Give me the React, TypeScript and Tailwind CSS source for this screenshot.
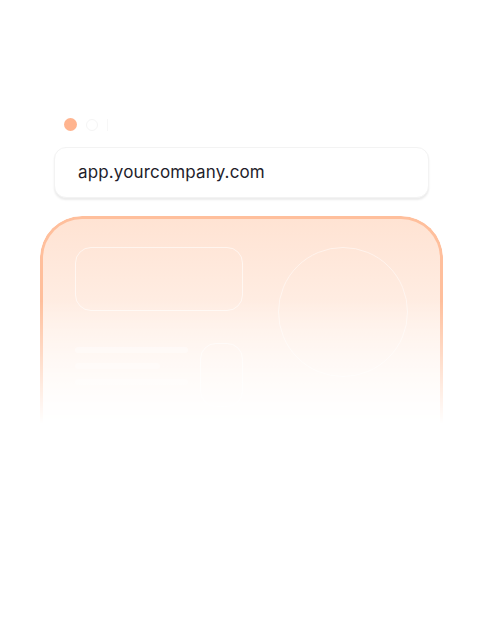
import React from 'react';

export default function App() {
  return (
    <div className="min-h-[636px] w-[483px] bg-white font-['Inter','Noto_Sans',sans-serif]">
      <div className="px-[54px] pt-[118px]">
        <div className="flex items-center gap-[9px] pl-[10px]">
          <span className="h-[13px] w-[13px] rounded-full bg-[#ffb48f]" />
          <span className="h-[12px] w-[12px] rounded-full border border-[#f5f5f5]" />
          <span className="h-[12px] w-[4px] border-l border-[#f7f7f7]" />
        </div>

        <div className="mt-[16px] flex h-[51px] items-center rounded-[12px] border border-[#f3f3f3] bg-white pl-[23px] shadow-[0_2px_2px_rgba(0,0,0,0.08)]">
          <span className="text-[17px] tracking-[0.15px] text-[#1f1d2b]">app.yourcompany.com</span>
        </div>
      </div>

      <div className="px-[40px] pt-[18px]">
        <div className="h-[212px] overflow-hidden rounded-t-[42px] border-x-[3px] border-t-[3px] border-[#ffbf9c] bg-gradient-to-b from-[#ffe3d3] via-[#ffefe6] to-[#fff9f5] [mask-image:linear-gradient(to_bottom,black_40%,transparent_98%)]">
          <div className="grid grid-cols-[168px_1fr] gap-x-[35px] px-[32px] pt-[28px]">
            <div className="flex flex-col gap-[32px]">
              <div className="h-[64px] rounded-[16px] border border-white/60" />
              <div className="flex gap-[12px]">
                <div className="flex flex-1 flex-col gap-[10px] pt-[4px]">
                  <div className="h-[6px] rounded-full bg-white/40" />
                  <div className="h-[6px] w-3/4 rounded-full bg-white/30" />
                  <div className="h-[6px] rounded-full bg-white/30" />
                </div>
                <div className="h-[64px] w-[43px] rounded-[16px] border border-white/60" />
              </div>
            </div>
            <div className="h-[130px] w-[130px] rounded-full border border-white/50" />
          </div>
        </div>
      </div>
    </div>
  );
}
